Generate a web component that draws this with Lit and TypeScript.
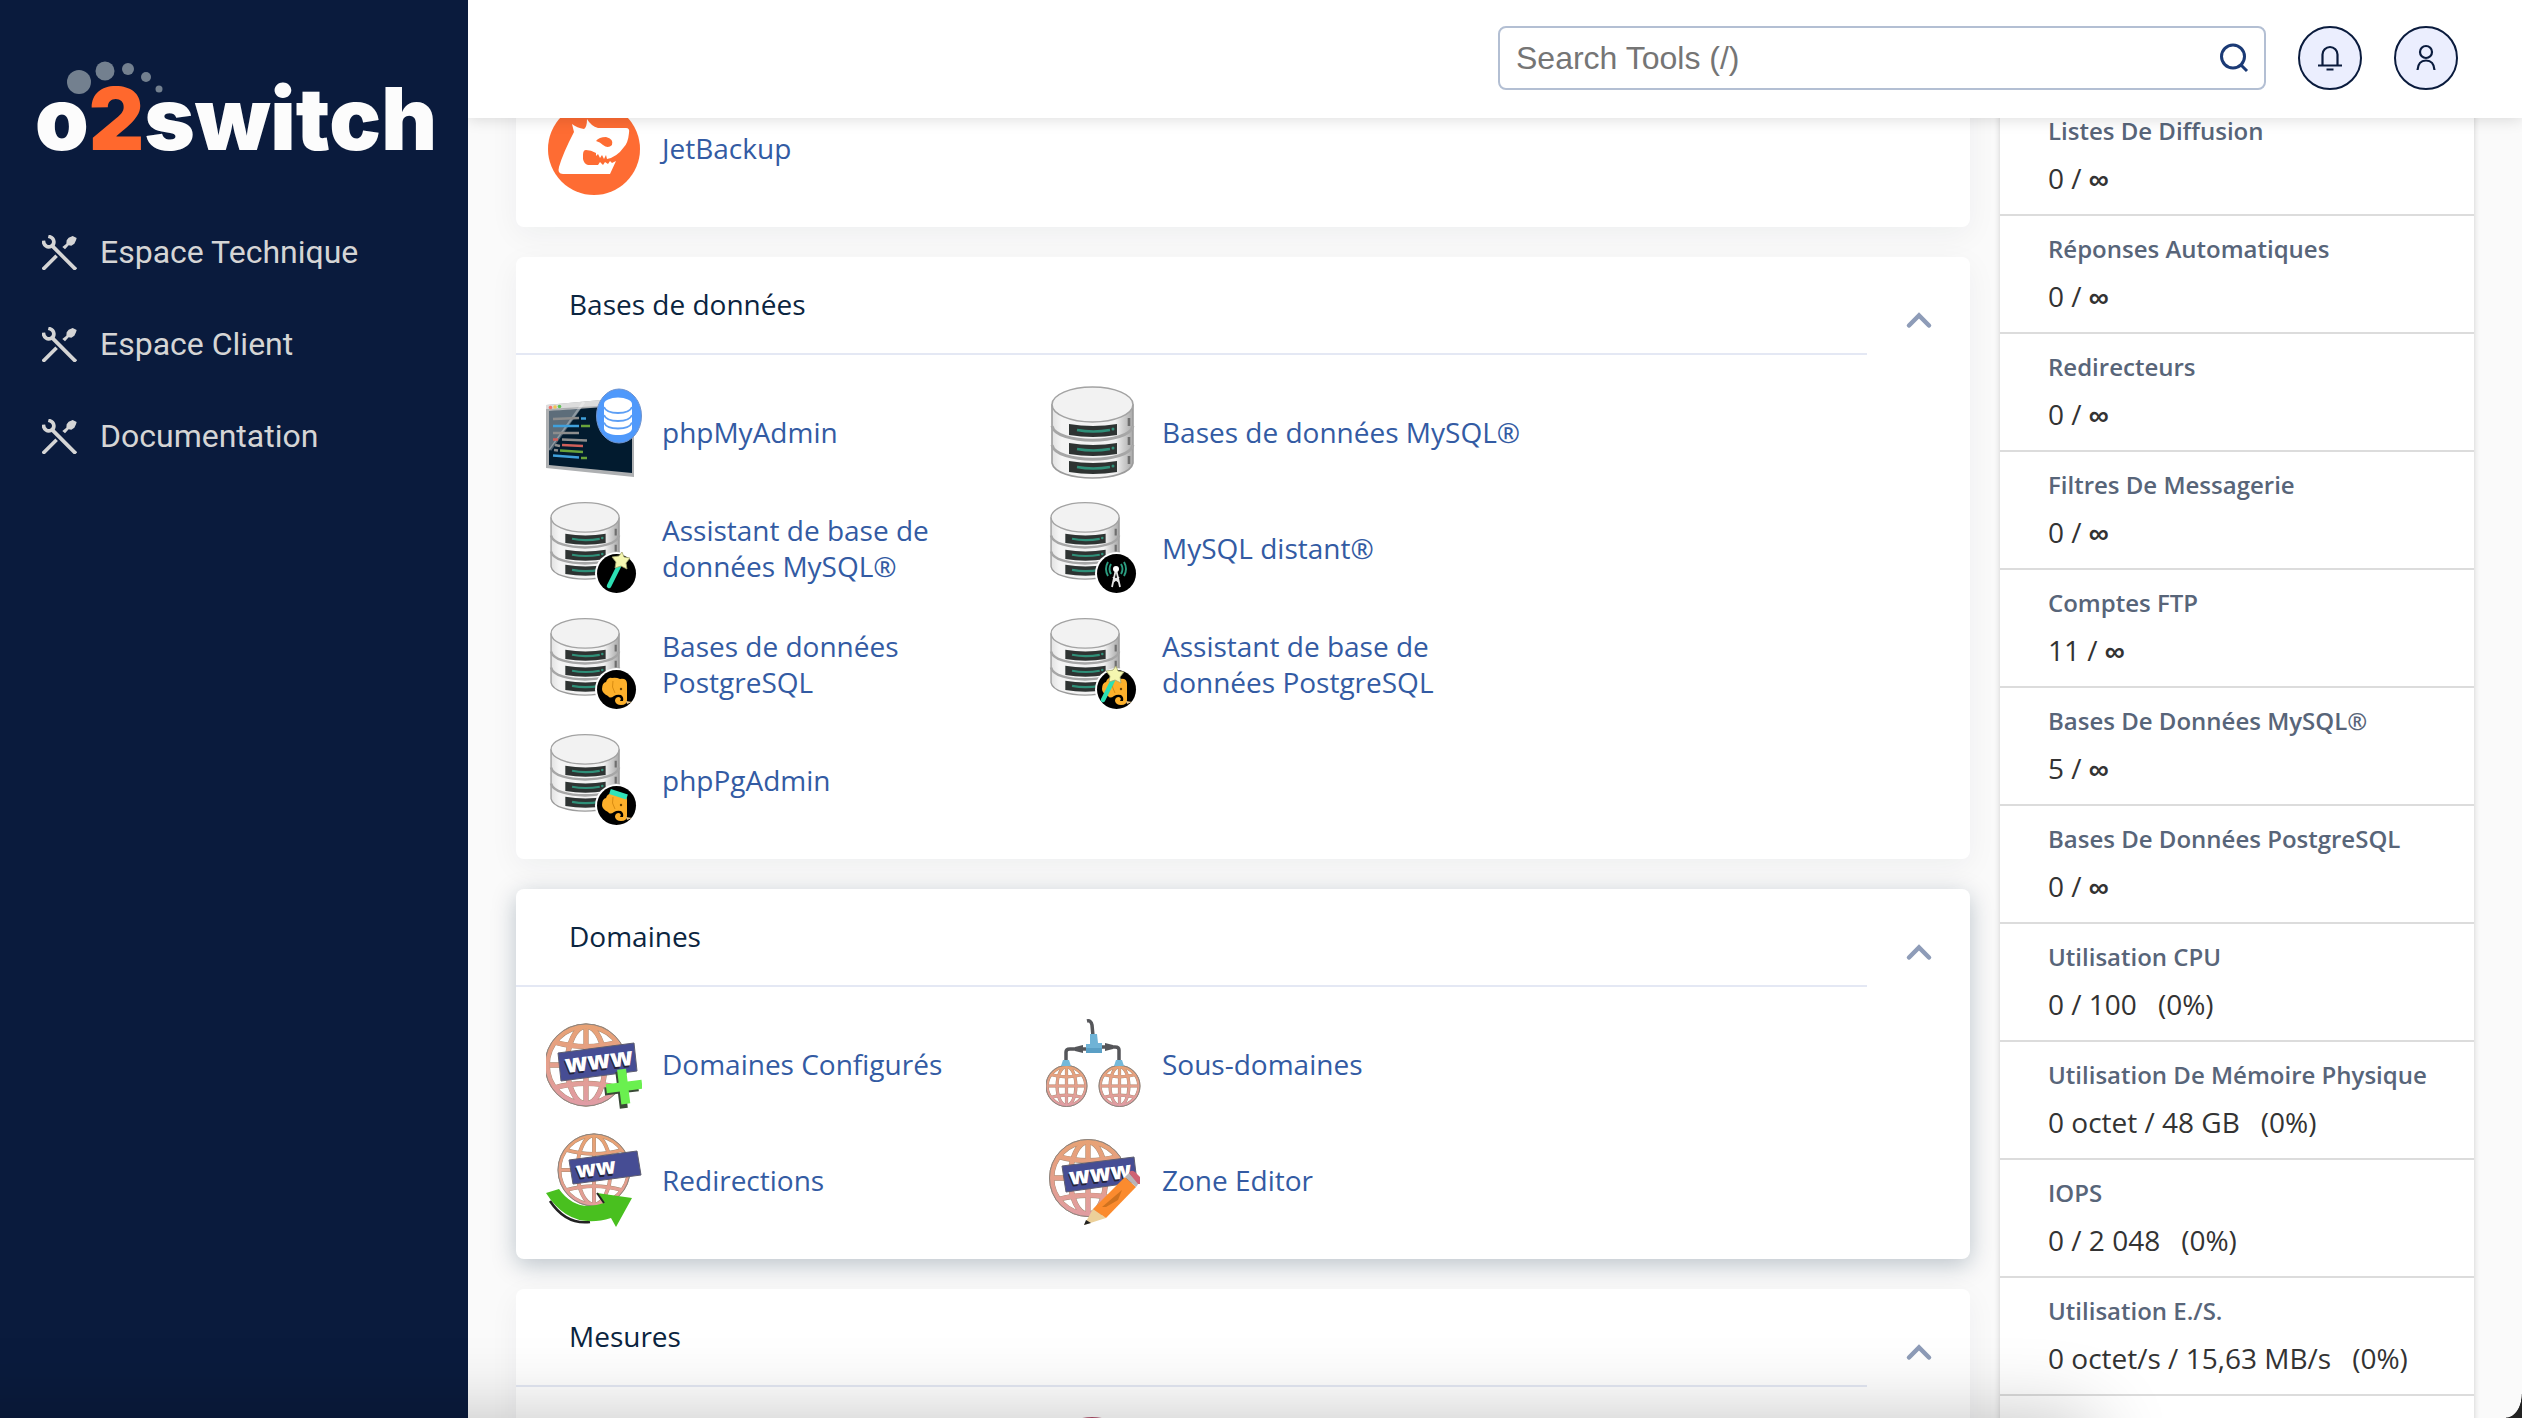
import { LitElement, html, svg, css, nothing, type TemplateResult } from "lit";
import { customElement, property, state } from "lit/decorators.js";
import { classMap } from "lit/directives/class-map.js";

/* ---------- icon parts, all drawn on a 96 x 96 board ---------- */

const warm = (id: string) => svg`
  <defs>
    <linearGradient id=${id} gradientUnits="userSpaceOnUse" x1="0" y1="6" x2="0" y2="90">
      <stop offset="0" stop-color="#e8a273"></stop>
      <stop offset="1" stop-color="#e09ca6"></stop>
    </linearGradient>
  </defs>`;

const globe = (cx: number, cy: number, r: number, w: number, fill: string) => {
  const k = r * 0.78;
  const d = r * 0.56;
  const grid = svg`
    <circle cx=${cx} cy=${cy} r=${r - w / 2}></circle>
    <ellipse cx=${cx} cy=${cy} rx=${r * 0.46} ry=${r - w / 2}></ellipse>
    <path d=${`M${cx} ${cy - r + w}V${cy + r - w}M${cx - r + w} ${cy}H${cx + r - w}`}></path>
    <path d=${`M${cx - k} ${cy - d}Q${cx} ${cy - d + r * 0.22} ${cx + k} ${cy - d}M${cx - k} ${cy + d}Q${cx} ${cy + d - r * 0.22} ${cx + k} ${cy + d}`}></path>`;
  return svg`
    <circle cx=${cx} cy=${cy} r=${r - w / 2} fill="#fff"></circle>
    <g fill="none" stroke="#a58b72" stroke-width=${w + 0.8}>${grid}</g>
    <g fill="none" stroke=${fill} stroke-width=${w}>${grid}</g>
    <circle cx=${cx} cy=${cy} r=${r} fill="none" stroke="#8d8580" stroke-width="1"></circle>`;
};

const banner = (points: string, x: number, y: number, label: string, size: number) => svg`
  <polygon points=${points} fill="#464d94" stroke="#5d5d70" stroke-width="1"></polygon>
  <g transform=${`rotate(-7 ${x} ${y})`} font-family="Open Sans, sans-serif" font-weight="800" font-size=${size}>
    <text x=${x - 1} y=${y + 2} fill="#23233a">${label}</text>
    <text x=${x} y=${y} fill="#fff">${label}</text>
  </g>`;

const slot = (y: number) => svg`
  <path d=${`M23 ${y}Q47 ${y + 4} 71 ${y}V${y + 11}Q47 ${y + 15} 23 ${y + 11}Z`} fill="#2e3332"></path>
  <path d=${`M31 ${y + 6}Q47 ${y + 9} 64 ${y + 6}`} fill="none" stroke="#2f8f78" stroke-width="2.6"></path>
  <circle cx="67" cy=${y + 5} r="1.5" fill="#2f8f78"></circle>`;

const cylinder = () => svg`
  <defs>
    <linearGradient id="drum" x1="0" y1="0" x2="1" y2="0">
      <stop offset="0" stop-color="#e2e2e2"></stop>
      <stop offset=".12" stop-color="#f4f4f4"></stop>
      <stop offset=".78" stop-color="#f2f2f2"></stop>
      <stop offset=".88" stop-color="#cfcfcf"></stop>
      <stop offset="1" stop-color="#a9a9a9"></stop>
    </linearGradient>
  </defs>
  <path d="M6 20V78C10 98 83 98 87 78V20Z" fill="url(#drum)" stroke="#9b9b9b" stroke-width="1.6"></path>
  <path d="M6 41C10 60 83 60 87 41M6 60C10 79 83 79 87 60" fill="none" stroke="#a6a6a6" stroke-width="3"></path>
  <ellipse cx="46.500" cy="19.500" rx="40.500" ry="17.500" fill="#f2f2f2" stroke="#a3a3a3" stroke-width="1.6"></ellipse>
  ${slot(39)}${slot(58)}${slot(76)}
  <path d="M83 33v8M83 52v8M83 71v8" stroke="#6f6f6f" stroke-width="2.600"></path>`;

const badged = (content: TemplateResult | ReturnType<typeof svg>) => svg`
  <g transform="translate(0 0) scale(.84)">${cylinder()}</g>
  <circle cx="70.500" cy="72.500" r="21.500" fill="#fff"></circle>
  <circle cx="70.500" cy="72.500" r="19.500" fill="#000"></circle>
  ${content}`;

const wand = (dx: number) => svg`
  <g transform=${`translate(${dx} 0)`}>
    <path d="M63 85L73 65" stroke="#2ce0b4" stroke-width="4.500" stroke-linecap="round"></path>
    <path d="M76 51l2 5 6 1-4 5 1 6-6-3-6 2 1-6-4-5 7-1z" fill="#f5f7b0" stroke="#a5a66e" stroke-width=".8"></path>
  </g>`;

const elephant = () => svg`
  <path d="M56 72Q56 66 60 65Q62 60 66 61Q70 60 74 62Q81 61 81 67V83Q81 88 75 88Q70 88 69 84Q69 80 73 80Q76 81 74 84L77 84Q78 80 75 78Q71 77 68 79Q64 82 62 79Q56 76 56 72Z" fill="#fdb02b"></path>
  <path d="M67 64Q65 70 69 76" fill="none" stroke="#d98c12" stroke-width="1"></path>
  <circle cx="75" cy="72" r="1.200" fill="#6b4200"></circle>
  <path d="M80 84l6 1-5 2z" fill="#e7c48a"></path>`;

const icons: Record<string, () => ReturnType<typeof svg>> = {
  jetbackup: () => svg`
    <circle cx="48" cy="48" r="46" fill="#fe6c33"></circle>
    <path d="M13 66Q17 52 28 31L26 23Q31 27 38 28Q41 26 41 18Q45 25 52 27L80 27Q84 27 83 32Q82 42 78 46Q71 56 61 58L60 54 58 58 56 54 54 57 52 53 50 55 50 52Q45 49 40 49Q37 49 37 54V58Q38 63 42 64H52L54 61 57 64 59 61 62 63 64 60 66 62 70 60 64 73H17Q11 73 13 66Z" fill="#fff"></path>
    <path d="M50 40Q53 36 60 36Q68 38 66 44Q62 48 57 44Q54 41 50 40Z" fill="#fe6c33"></path>`,
  phpmyadmin: () => svg`
    <path d="M0 20L88 12V92L0 83Z" fill="#aeb0b2"></path>
    <path d="M0 20L88 12V19L0 24Z" fill="#dcdcdc"></path>
    <path d="M3 26L86 20V88L3 80Z" fill="#021b2f"></path>
    <path d="M3 26L35 23L3 66Z" fill="#fff" opacity=".36"></path>
    <path d="M38 17l-34 48" stroke="#fff" stroke-width="3" opacity=".3"></path>
    <circle cx="4.500" cy="22.500" r="1.800" fill="#f4736b"></circle>
    <circle cx="9" cy="22" r="1.800" fill="#f1c453"></circle>
    <circle cx="13.500" cy="21.500" r="1.800" fill="#62c455"></circle>
    <g fill="none" stroke-width="2.600">
      <path d="M7 34l26-1M7 48h26M16 54.500l25 1M9 60l5 1M8 65l4 .5" stroke="#8d8d8d"></path>
      <path d="M35 33.500h5M7 41h26M7 70.500l26 2" stroke="#3fa0dc"></path>
      <path d="M35 41h9M14 65.500l23 1.500M35 73h6" stroke="#69a33b"></path>
      <path d="M16 60l21 1M7 54.500h5" stroke="#cf5f5a"></path>
    </g>
    <ellipse cx="73" cy="31" rx="22.500" ry="27" fill="#4f99fb" stroke="#6e93cf" stroke-width="1"></ellipse>
    <path d="M58 19V44C60 52 84 52 86 44V19Z" fill="#fff"></path>
    <ellipse cx="72" cy="19" rx="14" ry="6.500" fill="#fff"></ellipse>
    <path d="M58 22C61 30 83 30 86 22M58 30C61 38 83 38 86 30M58 37.500C61 45.500 83 45.500 86 37.500" fill="none" stroke="#5d9ff5" stroke-width="1.800"></path>`,
  mysql: () => svg`${cylinder()}`,
  mysqlWizard: () => badged(wand(0)),
  mysqlRemote: () =>
    badged(svg`
      <path d="M70 68L66 86M70 68L74 86M67 81l6-5M73 81l-6-5" fill="none" stroke="#e8e8e8" stroke-width="1.800"></path>
      <circle cx="70" cy="68" r="3" fill="#fff"></circle>
      <path d="M65 63q-3 5 0 10M75 63q3 5 0 10M62 61q-4 7 0 14M78 61q4 7 0 14" fill="none" stroke="#2b9d80" stroke-width="1.900"></path>`),
  pgsql: () => badged(elephant()),
  pgsqlWizard: () => badged(svg`${elephant()}<g transform="translate(-3 -2)">${wand(-3)}</g>`),
  phppgadmin: () =>
    badged(svg`${elephant()}<path d="M64 58.500L81 64" stroke="#2fe3b9" stroke-width="5.500"></path>`),
  domains: () => svg`
    ${warm("warm-domains")}
    ${globe(40, 48, 41, 4.5, "url(#warm-domains)")}
    ${banner("12,36 88,26 91,54 15,64", 20, 56, "www", 25)}
    <g transform="rotate(-7 78 68)">
      <path d="M71 54h8v14h13v8h-13v15h-8v-15h-13v-8h13z" fill="#3a4a37"></path>
      <path d="M73 52h9v13h14v9h-14v13h-9v-13h-13v-9h13z" fill="#6af04f"></path>
    </g>`,
  subdomains: () => svg`
    <g fill="none" stroke="#55565a" stroke-width="3.500">
      <path d="M41 4Q45 3 46 8L47 19"></path>
      <path d="M20 45V35Q20 32 24 32H41M73 45V33Q73 30 69 30H55"></path>
    </g>
    <path d="M29 30l8-2v8l-8-2zM67 28l-8-2v8l8-2z" fill="#55565a"></path>
    <path d="M44 17h7l1 9h4v10H40V27h4z" fill="#6fb3d6"></path>
    <path d="M40 31h16v5H40z" fill="#5a9fc5"></path>
    <defs>
      <linearGradient id="warm-sub" gradientUnits="userSpaceOnUse" x1="0" y1="48" x2="0" y2="90">
        <stop offset="0" stop-color="#e8a273"></stop>
        <stop offset="1" stop-color="#e09ca6"></stop>
      </linearGradient>
    </defs>
    ${globe(20.5, 69, 20.5, 2.4, "url(#warm-sub)")}
    ${globe(73.5, 69, 20.5, 2.4, "url(#warm-sub)")}
    <path d="M17 43h6l2 6h-10zM70 43h6l2 6h-10z" fill="#74b9da"></path>`,
  redirects: () => svg`
    ${warm("warm-redirects")}
    ${globe(48, 37, 36, 3, "url(#warm-redirects)")}
    ${banner("23,27 91,18 95,42 27,51", 31, 45, "ww", 22)}
    <path d="M4 68Q20 92 44 89" fill="none" stroke="#222" stroke-width="2.500"></path>
    <path d="M0 60L13 56Q30 80 58 70L51 60L86 65L70 94L65 85Q24 98 0 60Z" fill="#49c01f"></path>
    <path d="M51 60l7 10" stroke="#222" stroke-width="2"></path>`,
  zone: () => svg`
    ${warm("warm-zone")}
    ${globe(42, 45, 38.5, 4.5, "url(#warm-zone)")}
    ${banner("16,33 88,24 91,49 20,59", 24, 52, "www", 23)}
    <path d="M38 92L47 76L60 85Z" fill="#ecd09a"></path>
    <path d="M38 92l2-5 5 3z" fill="#222"></path>
    <path d="M47 76L79 44L90 54L60 85Z" fill="#fb8b2e"></path>
    <path d="M56 74L76 57L72 67L60 74Z" fill="#cf721f"></path>
    <path d="M79 44L83 40L93 50L90 54Z" fill="#b9b5b8"></path>
    <path d="M83 40Q85 36 89 39L94 44V51L92 51Z" fill="#cf6273"></path>`,
  metrics: () => svg`
    <ellipse cx="46" cy="40" rx="44" ry="40" fill="#b0506a"></ellipse>
    <ellipse cx="46" cy="44" rx="32" ry="28" fill="#f4f4f4"></ellipse>`,
};

const drawIcon = (name: string) => html`
  <svg class="tool-icon" viewBox="0 0 96 96" aria-hidden="true">${icons[name]()}</svg>`;

/* ---------- data ---------- */

interface Tool {
  icon: string;
  label: string;
}

interface Section {
  title: string;
  raised?: boolean;
  tools: Tool[];
}

const sections: Section[] = [
  {
    title: "Bases de données",
    tools: [
      { icon: "phpmyadmin", label: "phpMyAdmin" },
      { icon: "mysql", label: "Bases de données MySQL®" },
      { icon: "mysqlWizard", label: "Assistant de base de données MySQL®" },
      { icon: "mysqlRemote", label: "MySQL distant®" },
      { icon: "pgsql", label: "Bases de données PostgreSQL" },
      { icon: "pgsqlWizard", label: "Assistant de base de données PostgreSQL" },
      { icon: "phppgadmin", label: "phpPgAdmin" },
    ],
  },
  {
    title: "Domaines",
    raised: true,
    tools: [
      { icon: "domains", label: "Domaines Configurés" },
      { icon: "subdomains", label: "Sous-domaines" },
      { icon: "redirects", label: "Redirections" },
      { icon: "zone", label: "Zone Editor" },
    ],
  },
  {
    title: "Mesures",
    tools: [
      { icon: "", label: "" },
      { icon: "metrics", label: "" },
    ],
  },
];

interface Stat {
  name: string;
  used: string;
  limit?: string;
  share?: string;
}

/* A stat with no limit is shown as unlimited. */
const stats: Stat[] = [
  { name: "Listes De Diffusion", used: "0" },
  { name: "Réponses Automatiques", used: "0" },
  { name: "Redirecteurs", used: "0" },
  { name: "Filtres De Messagerie", used: "0" },
  { name: "Comptes FTP", used: "11" },
  { name: "Bases De Données MySQL®", used: "5" },
  { name: "Bases De Données PostgreSQL", used: "0" },
  { name: "Utilisation CPU", used: "0", limit: "100", share: "(0%)" },
  { name: "Utilisation De Mémoire Physique", used: "0 octet", limit: "48 GB", share: "(0%)" },
  { name: "IOPS", used: "0", limit: "2 048", share: "(0%)" },
  { name: "Utilisation E./S.", used: "0 octet/s", limit: "15,63 MB/s", share: "(0%)" },
];

/* ---------- sidebar ---------- */

@customElement("side-nav")
export class SideNav extends LitElement {
  static styles = css`
    :host {
      display: block;
      background: #0a1b3d;
      font-family: Roboto, "Liberation Sans", sans-serif;
    }
    .logo {
      display: block;
      width: 404px;
      height: 104px;
      margin: 56px 0 0 34px;
      overflow: visible;
    }
    .word {
      font-family: Inter, sans-serif;
      font-weight: 900;
      font-size: 86px;
      fill: #fcfcfc;
    }
    .two {
      fill: #ff682d;
    }
    .menu {
      display: flex;
      flex-direction: column;
      margin: 46px 0 0;
      padding: 0;
      list-style: none;
    }
    .link {
      display: flex;
      align-items: center;
      gap: 23px;
      height: 92px;
      padding-left: 42px;
      color: #d5d5d5;
      font-size: 32px;
      line-height: 40px;
      text-decoration: none;
    }
    .glyph {
      flex: none;
      width: 35px;
      height: 35px;
    }
  `;

  render() {
    return html`
      <svg class="logo" viewBox="0 0 404 104" role="img" aria-label="o2switch">
        <g fill="#73808f">
          <circle cx="45" cy="26" r="12"></circle>
          <circle cx="71" cy="15" r="9.500"></circle>
          <circle cx="94" cy="13" r="6"></circle>
          <circle cx="112" cy="21" r="5"></circle>
          <circle cx="125" cy="33" r="3.500"></circle>
        </g>
        <text class="word" x="1" y="94">o<tspan class="two">2</tspan>switch</text>
      </svg>
      <nav>
        <ul class="menu">
          ${["Espace Technique", "Espace Client", "Documentation"].map(
            (label) => html`<li>
              <a class="link" href="#">
                <svg class="glyph" viewBox="0 0 105 105" aria-hidden="true">
                  <g fill="none" stroke="#d5d5d5" stroke-width="11">
                    <path d="M4 17C5 32 17 39 27 34C39 28 40 9 19 4"></path>
                    <path d="M33 35L98 100M40 66L6 100" stroke-linecap="square"></path>
                  </g>
                  <path d="M92 3L104 9L102 16L97 26L88 32L80 31L69 43L61 36L73 26L74 16L80 8Z" fill="#d5d5d5"></path>
                </svg>
                <span>${label}</span>
              </a>
            </li>`,
          )}
        </ul>
      </nav>
    `;
  }
}

/* ---------- one collapsible group of tools ---------- */

@customElement("tool-card")
export class ToolCard extends LitElement {
  @property() heading = "";
  @property({ type: Boolean }) raised = false;
  @property({ attribute: false }) tools: Tool[] = [];
  @state() private open = true;

  static styles = css`
    :host {
      display: block;
      font-family: "Open Sans", "Noto Sans", sans-serif;
    }
    .card {
      position: relative;
      border-radius: 8px;
      background: #fff;
      box-shadow: 0 8px 30px rgba(9, 37, 64, 0.05);
    }
    .raised {
      box-shadow: 0 6px 24px rgba(9, 37, 64, 0.26);
    }
    .head {
      display: flex;
    }
    .title {
      flex: 1;
      margin: 0;
      padding: 29px 53px 31px;
      border-bottom: 2px solid #e4e8f4;
      color: #0b2540;
      font-size: 28px;
      font-weight: 400;
      line-height: 36px;
    }
    .toggle {
      display: flex;
      justify-content: center;
      align-items: center;
      width: 103px;
      padding: 28px 0 0;
      border: 0;
      background: none;
    }
    .chevron {
      width: 28px;
      height: 18px;
    }
    .tools {
      display: grid;
      grid-template-columns: repeat(auto-fill, 500px);
      padding: 20px 0 20px 30px;
    }
    .tool {
      display: flex;
      align-items: center;
      gap: 20px;
      height: 116px;
      padding-right: 20px;
      color: #335ba3;
      font-size: 28px;
      line-height: 36px;
      text-decoration: none;
    }
    .tool-name {
      padding-bottom: 2px;
    }
    .tool-icon {
      flex: none;
      width: 96px;
      height: 96px;
    }
  `;

  render() {
    return html`
      <section class=${classMap({ card: true, raised: this.raised })}>
        ${this.heading
          ? html`<header class="head">
              <h2 class="title">${this.heading}</h2>
              <button
                class="toggle"
                aria-label=${this.heading}
                aria-expanded=${this.open ? "true" : "false"}
                @click=${() => (this.open = !this.open)}
              >
                <svg class="chevron" viewBox="0 0 28 18" aria-hidden="true">
                  <path d="M4 14.500L14 4.500L24 14.500" fill="none" stroke="#8e9cb8" stroke-width="4.500" stroke-linecap="round"></path>
                </svg>
              </button>
            </header>`
          : nothing}
        ${this.open
          ? html`<div class="tools">
              ${this.tools.map((tool) =>
                tool.label
                  ? html`<a class="tool" href="#">${drawIcon(tool.icon)}<span class="tool-name">${tool.label}</span></a>`
                  : html`<div class="tool">${tool.icon ? drawIcon(tool.icon) : nothing}</div>`,
              )}
            </div>`
          : nothing}
      </section>
    `;
  }
}

/* ---------- usage figures ---------- */

@customElement("stats-panel")
export class StatsPanel extends LitElement {
  static styles = css`
    :host {
      display: block;
      background: #fff;
      box-shadow: 0 0 6px rgba(0, 0, 0, 0.18);
      font-family: "Open Sans", "Noto Sans", sans-serif;
    }
    .list {
      margin: 0;
    }
    .row {
      display: flex;
      flex-direction: column;
      gap: 10px;
      padding: 16px 48px;
      border-bottom: 2px solid #dcdcdc;
    }
    .name {
      color: #586579;
      font-size: 24px;
      font-weight: 600;
      line-height: 34px;
      white-space: nowrap;
    }
    .value {
      display: flex;
      gap: 21px;
      margin: 0;
      color: #333;
      font-size: 28px;
      line-height: 40px;
      white-space: nowrap;
    }
    .unlimited {
      font-family: "Liberation Sans", Arial, sans-serif;
      font-weight: 700;
      line-height: 20px;
    }
  `;

  render() {
    return html`
      <dl class="list">
        ${stats.map(
          (s) => html`<div class="row">
            <dt class="name">${s.name}</dt>
            <dd class="value">
              <span>${s.used} / ${s.limit ?? html`<span class="unlimited">∞</span>`}</span>
              ${s.share ? html`<span>${s.share}</span>` : nothing}
            </dd>
          </div>`,
        )}
      </dl>
    `;
  }
}

/* ---------- page ---------- */

@customElement("app-root")
export class AppRoot extends LitElement {
  static styles = css`
    :host {
      position: relative;
      display: grid;
      grid-template-columns: 468px 1fr;
      height: 100vh;
      overflow: hidden;
      background: #fafafa;
      font-family: "Open Sans", "Noto Sans", sans-serif;
    }
    .page {
      display: flex;
      flex-direction: column;
      min-width: 0;
      min-height: 0;
      overflow: hidden;
    }
    .topbar {
      position: relative;
      z-index: 2;
      flex: none;
      display: flex;
      justify-content: flex-end;
      align-items: center;
      gap: 32px;
      padding: 26px 64px 28px;
      background: #fff;
      box-shadow: 0 2px 14px rgba(0, 0, 0, 0.13);
    }
    .search {
      display: flex;
      align-items: center;
      box-sizing: border-box;
      width: 768px;
      height: 64px;
      border: 2px solid #b3bfd3;
      border-radius: 8px;
      background: #fff;
    }
    .field {
      flex: 1;
      min-width: 0;
      padding: 0 0 0 16px;
      border: 0;
      outline: 0;
      background: none;
      color: #333;
      font-family: "Liberation Sans", Arial, sans-serif;
      font-size: 32px;
      line-height: 40px;
    }
    .field::placeholder {
      color: #757575;
      opacity: 1;
    }
    .go {
      display: flex;
      padding: 0 14px 0 0;
      border: 0;
      background: none;
    }
    .go-icon {
      width: 32px;
      height: 32px;
    }
    .round {
      display: flex;
      justify-content: center;
      align-items: center;
      box-sizing: border-box;
      width: 64px;
      height: 64px;
      padding: 0;
      border: 2px solid #0a1b3d;
      border-radius: 50%;
      background: #ebeefe;
    }
    .round-icon {
      width: 32px;
      height: 32px;
    }
    .content {
      display: grid;
      grid-template-columns: 1fr 474px;
      flex: 1;
      gap: 30px;
      min-height: 0;
      margin-top: -47px;
      padding: 0 48px;
    }
    .cards {
      display: flex;
      flex-direction: column;
      gap: 30px;
      min-width: 0;
    }
    .stats {
      margin-top: 27px;
    }
    .shade {
      position: absolute;
      z-index: 3;
      top: 100%;
      right: 430px;
      left: -80px;
      height: 200px;
      box-shadow: 0 0 80px rgba(0, 0, 0, 0.24);
      pointer-events: none;
    }
    .corner {
      position: absolute;
      z-index: 4;
      right: 0;
      bottom: 0;
      width: 16px;
      height: 24px;
      background: radial-gradient(ellipse 16px 24px at 0 0, transparent 96%, #222 100%);
      pointer-events: none;
    }
  `;

  render() {
    return html`
      <side-nav></side-nav>
      <div class="page">
        <header class="topbar">
          <form class="search" role="search" @submit=${(e: Event) => e.preventDefault()}>
            <input class="field" type="text" placeholder="Search Tools (/)" aria-label="Search Tools" />
            <button class="go" aria-label="Search">
              <svg class="go-icon" viewBox="0 0 32 32" aria-hidden="true">
                <g fill="none" stroke="#1b3a75" stroke-width="3">
                  <circle cx="15" cy="14.500" r="11.500"></circle>
                  <path d="M23 23l6 6"></path>
                </g>
              </svg>
            </button>
          </form>
          <button class="round" aria-label="Notifications">
            <svg class="round-icon" viewBox="0 0 32 32" aria-hidden="true">
              <g fill="none" stroke="#0a1b3d" stroke-width="2.200">
                <path d="M8.500 23V12.500a7.500 7.500 0 0 1 15 0V23"></path>
                <path d="M4 23.500h24M12.500 27.500h7"></path>
              </g>
            </svg>
          </button>
          <button class="round" aria-label="Compte">
            <svg class="round-icon" viewBox="0 0 32 32" aria-hidden="true">
              <g fill="none" stroke="#0a1b3d" stroke-width="2.200">
                <circle cx="16" cy="10" r="6"></circle>
                <path d="M7.500 28C8 21 12 18.500 16 18.500S24 21 24.500 28"></path>
              </g>
            </svg>
          </button>
        </header>
        <div class="content">
          <main class="cards">
            <tool-card .tools=${[{ icon: "jetbackup", label: "JetBackup" }]}></tool-card>
            ${sections.map(
              (s) => html`<tool-card .heading=${s.title} .raised=${!!s.raised} .tools=${s.tools}></tool-card>`,
            )}
          </main>
          <stats-panel class="stats"></stats-panel>
        </div>
      </div>
      <div class="shade"></div>
      <div class="corner"></div>
    `;
  }
}
